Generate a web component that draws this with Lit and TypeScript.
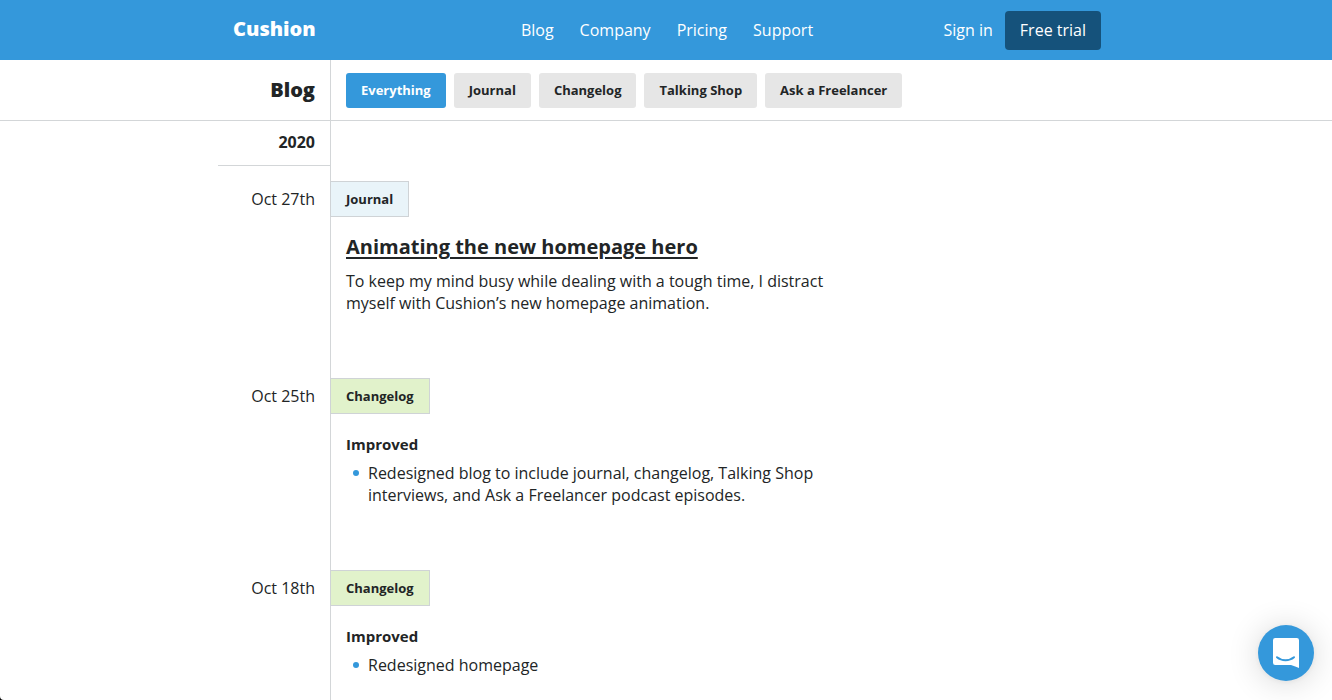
import { LitElement, html, css, nothing } from "lit";
import { customElement, property, state } from "lit/decorators.js";
import { classMap } from "lit/directives/class-map.js";

interface Entry {
  date: string;
  kind: "journal" | "changelog";
  label: string;
  title?: string;
  summary?: string;
  heading?: string;
  items?: string[];
}

const NAV = ["Blog", "Company", "Pricing", "Support"];
const FILTERS = ["Everything", "Journal", "Changelog", "Talking Shop", "Ask a Freelancer"];
const ENTRIES: Entry[] = [
  {
    date: "Oct 27th",
    kind: "journal",
    label: "Journal",
    title: "Animating the new homepage hero",
    summary:
      "To keep my mind busy while dealing with a tough time, I distract myself with Cushion’s new homepage animation.",
  },
  {
    date: "Oct 25th",
    kind: "changelog",
    label: "Changelog",
    heading: "Improved",
    items: [
      "Redesigned blog to include journal, changelog, Talking Shop interviews, and Ask a Freelancer podcast episodes.",
    ],
  },
  {
    date: "Oct 18th",
    kind: "changelog",
    label: "Changelog",
    heading: "Improved",
    items: ["Redesigned homepage"],
  },
];

@customElement("blog-entry")
export class BlogEntry extends LitElement {
  @property({ attribute: false }) entry!: Entry;

  static styles = css`
    :host { display: block; }
    .entry { display: grid; grid-template-columns: 112px minmax(0, 1fr); }
    .date { padding: 0 15px; text-align: right; line-height: 36px; white-space: nowrap; }
    .tag {
      display: inline-block; box-sizing: border-box; height: 36px; line-height: 35px;
      padding: 0 15px; border: 1px solid #cfd3d6; font-size: 13px; font-weight: 700;
      color: inherit; text-decoration: none; vertical-align: top;
    }
    .journal { background: #e9f4f9; }
    .changelog { background: #e1f2cb; }
    .body { max-width: 485px; padding: 16px 0 0 16px; }
    .title { margin: 0 0 9px; font-size: 20px; line-height: 28px; font-weight: 700; }
    .title a { color: inherit; text-decoration-thickness: 2px; text-underline-offset: 3px; }
    .heading { margin: 0 0 4px; font-size: 15px; line-height: 28px; font-weight: 700; }
    .summary { margin: 0; }
    .list { margin: 0; padding: 0; list-style: none; }
    .list li { display: grid; grid-template-columns: 22px minmax(0, 1fr); }
    .list li::before {
      content: ""; width: 6px; height: 6px; margin: 8px 0 0 7px;
      border-radius: 50%; background: #3498db;
    }
  `;

  render() {
    const e = this.entry;
    return html`<article class="entry">
      <time class="date">${e.date}</time>
      <div>
        <a class="tag ${e.kind}" href="#${e.kind}">${e.label}</a>
        <div class="body">
          ${e.title ? html`<h2 class="title"><a href="#post">${e.title}</a></h2>` : nothing}
          ${e.summary ? html`<p class="summary">${e.summary}</p>` : nothing}
          ${e.heading ? html`<h3 class="heading">${e.heading}</h3>` : nothing}
          ${e.items ? html`<ul class="list">${e.items.map((i) => html`<li><span>${i}</span></li>`)}</ul>` : nothing}
        </div>
      </div>
    </article>`;
  }
}

@customElement("app-root")
export class AppRoot extends LitElement {
  @state() private active = "Everything";

  static styles = css`
    :host {
      display: block; background: #000; color: #222526;
      font: 16px/22px "Open Sans", "Noto Sans", sans-serif;
    }
    .page {
      display: flex; flex-direction: column; min-height: 100vh;
      background: #fff; border-bottom-left-radius: 4px;
    }
    .wrap { box-sizing: border-box; width: 100%; max-width: 896px; margin: 0 auto; }
    .top { background: #3498db; }
    .bar { display: grid; grid-template-columns: 1fr auto 1fr; align-items: center; height: 60px; padding: 0 13px 0 15px; }
    .bar a { color: #fff; text-decoration: none; }
    .bar .logo { font-size: 20px; line-height: 28px; font-weight: 800; padding-bottom: 2px; }
    .nav { display: flex; gap: 26px; }
    .account { display: flex; justify-content: flex-end; align-items: center; gap: 12px; }
    .account .trial { background: #15527b; border-radius: 4px; padding: 8px 15px; line-height: 23px; }
    .sub { border-bottom: 1px solid #d3d6d8; }
    .subrow { display: grid; grid-template-columns: 112px minmax(0, 1fr); height: 60px; }
    .name { margin: 0; padding: 0 15px; text-align: right; font-size: 20px; line-height: 60px; font-weight: 800; }
    .filters { display: flex; align-items: center; gap: 8px; padding: 0 15px; border-left: 1px solid #d3d6d8; }
    .filter {
      height: 35px; padding: 0 15px; border: 0; border-radius: 3px; background: #e6e6e6;
      color: inherit; font: inherit; font-size: 13px; line-height: 35px; font-weight: 700;
      white-space: nowrap; cursor: pointer;
    }
    .filter.on { background: #3498db; color: #fff; }
    .main {
      flex: 1; padding-bottom: 24px;
      background: linear-gradient(#d3d6d8, #d3d6d8) 112px 0 / 1px 100% no-repeat;
    }
    .year {
      width: 112px; box-sizing: border-box; margin: 0 0 15px; padding: 0 15px 2px;
      border-bottom: 1px solid #d3d6d8; text-align: right;
      font-size: 16px; line-height: 42px; font-weight: 700;
    }
    .entries { display: flex; flex-direction: column; gap: 64px; }
    .chat {
      position: fixed; right: 18px; bottom: 19px; width: 56px; height: 56px; padding: 0;
      display: grid; place-items: center; border: 0; border-radius: 50%; background: #3498db;
      box-shadow: 0 1px 6px rgba(0, 0, 0, 0.06), 0 2px 32px rgba(0, 0, 0, 0.16); cursor: pointer;
    }
  `;

  render() {
    return html`<div class="page">
      <header class="top">
        <div class="wrap bar">
          <a class="logo" href="#home">Cushion</a>
          <nav class="nav">${NAV.map((n) => html`<a href="#${n.toLowerCase()}">${n}</a>`)}</nav>
          <div class="account">
            <a href="#sign-in">Sign in</a><a class="trial" href="#trial">Free trial</a>
          </div>
        </div>
      </header>
      <div class="sub">
        <div class="wrap subrow">
          <h1 class="name">Blog</h1>
          <div class="filters">
            ${FILTERS.map(
              (f) => html`<button
                class=${classMap({ filter: true, on: f === this.active })}
                aria-pressed=${f === this.active}
                @click=${() => (this.active = f)}
              >${f}</button>`
            )}
          </div>
        </div>
      </div>
      <main class="wrap main">
        <h2 class="year">2020</h2>
        <div class="entries">${ENTRIES.map((e) => html`<blog-entry .entry=${e}></blog-entry>`)}</div>
      </main>
      <button class="chat" aria-label="Open chat">
        <svg width="28" height="30" viewBox="0 0 28 30" aria-hidden="true">
          <path fill="#fff" d="M3.200 0h21.600A2.200 2.200 0 0 1 27 2.200V30c-2.400-1-5-2.100-8-3H3.200A2.200 2.200 0 0 1 1 24.800V2.200A2.200 2.200 0 0 1 3.200 0z" />
          <path fill="none" stroke="#3498db" stroke-width="2" stroke-linecap="round" d="M5 19.200c4.700 3.900 12.300 3.900 17 0" />
        </svg>
      </button>
    </div>`;
  }
}
